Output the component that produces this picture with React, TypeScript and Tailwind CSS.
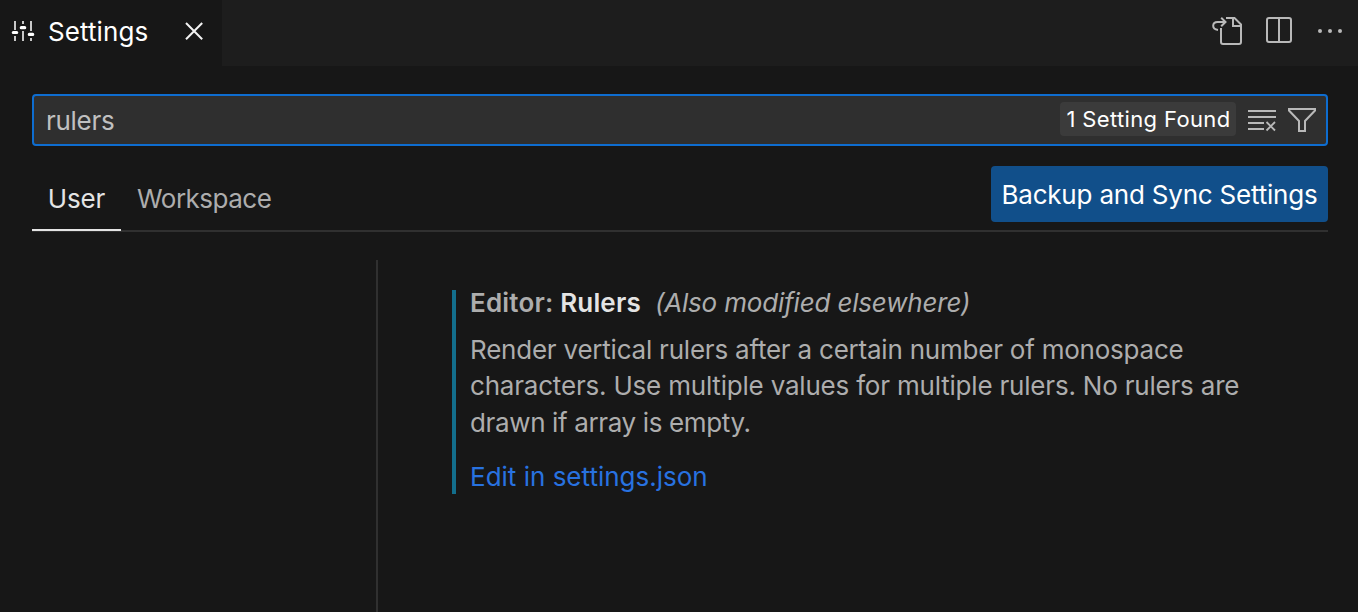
import React from "react";

const TuneIcon = () => (
  <svg className="h-8 w-8 shrink-0" viewBox="8 15 32 32" fill="none">
    <path strokeWidth="2" stroke="#c8c8c8" d="M15 21v9M15 36v5M23 21v3M23 31v10M31 21v10M31 38v3" />
    <path strokeWidth="3.200" stroke="#ffffff" strokeLinecap="round" d="M13.300 32.500h3.400M21.300 27.700h3.400M29.300 34.400h3.400" />
  </svg>
);

const CloseIcon = () => (
  <svg className="h-8 w-8 shrink-0" viewBox="178 15 32 32" fill="none" stroke="#f2f2f2" strokeWidth="2">
    <path d="M186 23l16.200 16.200M202.200 23L186 39.200" />
  </svg>
);

const OpenFileIcon = () => (
  <svg className="h-8 w-8 shrink-0" viewBox="1211 15 32 32" fill="none" stroke="#b9b9b9" strokeWidth="2">
    <path d="M1226 18h8.500l6.500 6.500v17.500a2 2 0 0 1-2 2h-16a2 2 0 0 1-2-2v-14" />
    <path d="M1233 18v8h8" />
    <path d="M1218 30c-2.800-.4-4.800-2-4.800-4.200 0-2.400 1.900-3.800 4.400-3.800h7.600M1221.200 17.800l4.300 4.200-4.300 4.300" />
  </svg>
);

const SplitIcon = () => (
  <svg className="h-8 w-8 shrink-0" viewBox="1263 15 32 32" fill="none" stroke="#b9b9b9" strokeWidth="2">
    <rect x="1267" y="18" width="24" height="24" rx="2" />
    <path d="M1279 18v24" />
  </svg>
);

const MoreIcon = () => (
  <svg className="h-8 w-8 shrink-0" viewBox="1314 15 32 32" fill="#b9b9b9">
    <circle cx="1320" cy="31" r="2" />
    <circle cx="1330" cy="31" r="2" />
    <circle cx="1340" cy="31" r="2" />
  </svg>
);

const ClearIcon = () => (
  <svg className="h-8 w-8 shrink-0" viewBox="1246 104 32 32" fill="none" stroke="#b9b9b9" strokeWidth="2">
    <path d="M1248 111h28M1248 117h28M1248 123h16M1248 129h16" />
    <path strokeWidth="1.8" d="M1266.500 122l8.500 8.500M1275 122l-8.500 8.500" />
  </svg>
);

const FilterIcon = () => (
  <svg className="h-8 w-8 shrink-0" viewBox="1286 104 32 32" fill="none" stroke="#b9b9b9" strokeWidth="2">
    <path d="M1289 109h26v1.500l-10 10.500v10h-6v-10l-10-10.500z" />
  </svg>
);

export default function App() {
  return (
    <div className="flex h-[612px] w-[1358px] flex-col overflow-hidden bg-[#171717] font-['Inter',sans-serif] text-[26px] whitespace-nowrap text-[#adadad]">
      <header className="flex h-[66px] shrink-0">
        <div className="flex h-full w-[222px] items-center pb-1 pl-2">
          <TuneIcon />
          <span className="ml-2 w-[100px] pt-0.5 leading-8 tracking-[0.1px] text-white">Settings</span>
          <button className="ml-[30px] flex" aria-label="Close"><CloseIcon /></button>
        </div>
        <div className="flex flex-1 items-center bg-[#1d1d1d] pr-3 pb-1">
          <div className="ml-auto flex"><OpenFileIcon /></div>
          <div className="ml-5 flex"><SplitIcon /></div>
          <div className="ml-[19px] flex"><MoreIcon /></div>
        </div>
      </header>

      <div className="mt-7 mr-[30px] ml-8 flex h-[52px] shrink-0 items-center rounded-[4px] border-2 border-[#0e6dd0] bg-[#2f2f2f] pr-2 pl-3">
        <span className="flex-1 pt-px tracking-[-0.3px] text-[#c0c0c0]">rulers</span>
        <span className="mb-0.5 flex h-[34px] w-44 items-center justify-center rounded-[4px] bg-[#3b3b3b] pl-px text-[22px] tracking-[0.35px] text-white">1 Setting Found</span>
        <div className="ml-[10px] flex gap-2"><ClearIcon /><FilterIcon /></div>
      </div>

      <nav className="mr-[30px] ml-8 flex h-[86px] shrink-0 border-b-2 border-[#303030] pt-5">
        <div className="-mb-px flex w-[89px] items-center justify-center border-b-2 border-[#e4e4e4] pt-0.5 tracking-[-0.1px] text-[#e4e4e4]">User</div>
        <div className="flex items-center pl-4 tracking-[-0.5px]">Workspace</div>
        <button className="ml-auto flex h-14 w-[337px] items-center justify-center rounded-[4px] bg-[#114f8a] tracking-[-0.2px] text-white">Backup and Sync Settings</button>
      </nav>

      <div className="mt-7 flex flex-1">
        <aside className="w-[378px] border-r-2 border-[#303030]" />
        <main className="mt-[30px] ml-[74px] flex h-[204px] flex-col border-l-4 border-[#136e8c] pl-[14px]">
          <h2 className="h-[26px] leading-[26px]">
            <span className="font-semibold tracking-[0.18px]">Editor: </span>
            <span className="font-semibold tracking-[0.18px] text-[#e4e4e4]">Rulers</span>
            <span className="ml-[14px] tracking-[-0.18px] italic">(Also modified elsewhere)</span>
          </h2>
          <p className="mt-4 leading-[36.5px]">
            <span className="block tracking-[-0.22px]">Render vertical rulers after a certain number of monospace</span>
            <span className="-mt-px mb-px block tracking-[-0.2px]">characters. Use multiple values for multiple rulers. No rulers are</span>
            <span className="block tracking-[-0.36px]">drawn if array is empty.</span>
          </p>
          <a className="mt-[17px] leading-[36px] text-[#2872e0]">Edit in settings.json</a>
        </main>
      </div>
    </div>
  );
}
